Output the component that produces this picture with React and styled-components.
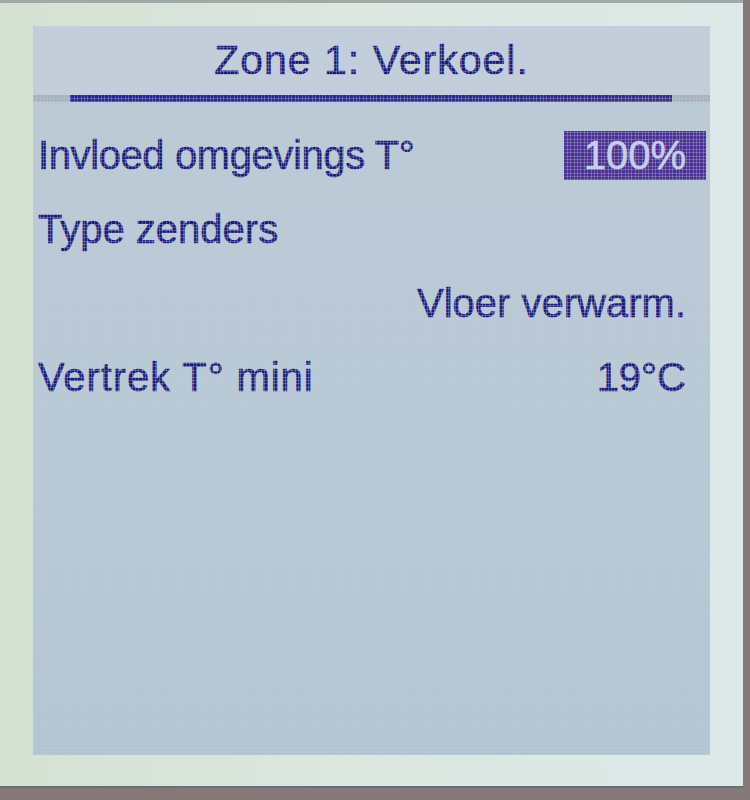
import React from "react";
import styled, { createGlobalStyle } from "styled-components";

const GlobalStyle = createGlobalStyle`
  html, body {
    margin: 0;
    padding: 0;
    background: #85797a;
  }
`;

const Housing = styled.div`
  width: 750px;
  height: 800px;
  background: #85797a;
  overflow: hidden;
`;

const Bezel = styled.div`
  width: 743px;
  height: 788px;
  box-sizing: border-box;
  padding: 23px 0 0 33px;
  border-top: 3px solid #a2a8a5;
  border-bottom: 2px solid #66707a;
  background: linear-gradient(90deg, #d4e1d2 0%, #dbe7df 45%, #dce9e8 100%);
`;

const Screen = styled.div`
  position: relative;
  width: 677px;
  height: 729px;
  display: flex;
  flex-direction: column;
  background: linear-gradient(180deg, #bccad6 0%, #b9c8d5 60%, #b2c4d2 100%);
  font-family: "Liberation Sans", Arial, sans-serif;
  color: #1b1b7c;
  -webkit-text-stroke: 0.6px currentColor;
`;

// faint LCD dot matrix laid over everything on the glass
const DotGrid = styled.div`
  position: absolute;
  inset: 0;
  pointer-events: none;
  background-image:
    repeating-linear-gradient(90deg, rgba(190, 205, 218, 0.3) 0 1px, transparent 1px 3.4px),
    repeating-linear-gradient(0deg, rgba(190, 205, 218, 0.3) 0 1px, transparent 1px 3.4px);
`;

const Header = styled.div`
  height: 69px;
  display: flex;
  align-items: center;
  justify-content: center;
  background: #c3ceda;
  font-size: 41px;
  letter-spacing: 1px;
`;

const Rule = styled.div`
  height: 7px;
  padding: 0 38px 0 37px;
  background: #a9b1ba;
`;

const RuleBar = styled.div`
  height: 100%;
  background: linear-gradient(90deg, #23239a 0%, #2a2596 70%, #3a2a8c 100%);
`;

const List = styled.div`
  display: flex;
  flex-direction: column;
  padding: 16px 4px 0 4px;
`;

const Row = styled.div`
  height: 74px;
  display: flex;
  align-items: center;
  justify-content: ${(p) => (p.$end ? "flex-end" : "space-between")};
  font-size: 40px;
`;

const Label = styled.span`
  padding-left: 1px;
  letter-spacing: ${(p) => p.$spacing || "0"};
`;

const Value = styled.span`
  height: 49px;
  display: flex;
  align-items: center;
  padding: 0 20px;
  background: ${(p) => (p.$active ? "#4b2f93" : "transparent")};
  color: ${(p) => (p.$active ? "#c8cdee" : "inherit")};
`;

const rows = [
  { label: "Invloed omgevings T°", value: "100%", active: true, spacing: "-0.4px" },
  { label: "Type zenders" },
  { value: "Vloer verwarm." },
  { label: "Vertrek T° mini", value: "19°C", spacing: "0.9px" },
];

export default function App() {
  return (
    <Housing>
      <GlobalStyle />
      <Bezel>
        <Screen>
          <Header>Zone 1: Verkoel.</Header>
          <Rule>
            <RuleBar />
          </Rule>
          <List>
            {rows.map((r, i) => (
              <Row key={i} $end={!r.label}>
                {r.label && <Label $spacing={r.spacing}>{r.label}</Label>}
                {r.value && <Value $active={r.active}>{r.value}</Value>}
              </Row>
            ))}
          </List>
          <DotGrid />
        </Screen>
      </Bezel>
    </Housing>
  );
}
